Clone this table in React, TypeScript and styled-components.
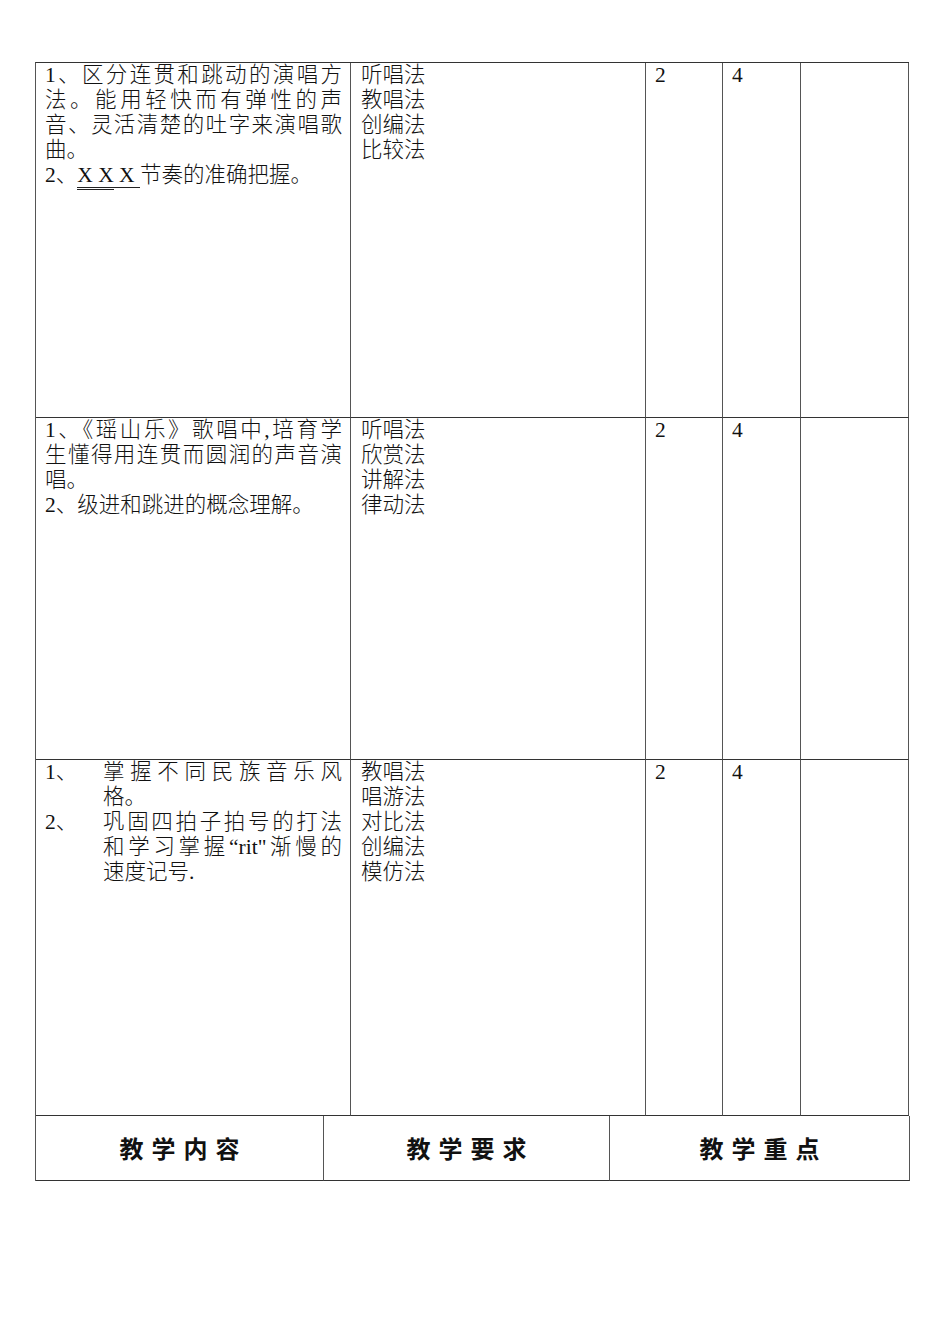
import React from 'react';
import styled, { createGlobalStyle } from 'styled-components';

const GlobalStyle = createGlobalStyle`
  html, body {
    margin: 0;
    padding: 0;
    background: #ffffff;
  }
  body {
    font-family: 'Liberation Serif', 'Noto Sans CJK SC', serif;
    color: #111111;
  }
`;

const Page = styled.div`
  width: 950px;
  min-height: 1344px;
  box-sizing: border-box;
  padding: 62px 0 0 35px;
`;

const Table = styled.div`
  display: grid;
  grid-template-columns: 315px 295px 77px 78px 108px;
  width: 874px;
  border-top: 1px solid #333;
  border-left: 1px solid #555;
  box-sizing: border-box;
`;

const Cell = styled.div<{ $height: number; $padLeft?: number }>`
  height: ${p => p.$height}px;
  box-sizing: border-box;
  border-right: 1px solid #555;
  border-bottom: 1px solid #333;
  padding: 0 8px 0 ${p => p.$padLeft ?? 9}px;
  font-size: 21.5px;
  font-weight: 300;
  line-height: 25px;
`;

const Line = styled.div<{ $justify?: boolean }>`
  white-space: nowrap;
  text-align: ${p => (p.$justify ? 'justify' : 'left')};
  text-align-last: ${p => (p.$justify ? 'justify' : 'left')};
`;

const Item = styled.div`
  display: grid;
  grid-template-columns: 58px 1fr;
`;

const DoubleUnder = styled.span`
  border-bottom: 3px double #222;
`;

const SingleUnder = styled.span`
  border-bottom: 1px solid #222;
`;

const Footer = styled.div`
  display: grid;
  grid-template-columns: 288px 286px 300px;
  width: 874px;
  border-left: 1px solid #555;
  box-sizing: border-box;
`;

const HeadCell = styled.div`
  height: 65px;
  box-sizing: border-box;
  border-right: 1px solid #555;
  border-bottom: 1px solid #333;
  display: flex;
  align-items: center;
  justify-content: center;
  font-family: 'Noto Sans CJK SC', sans-serif;
  font-weight: 700;
  font-size: 24px;
  letter-spacing: 8px;
  padding-left: 8px;
  padding-bottom: 2px;
`;

type Row = {
  height: number;
  content: React.ReactNode;
  methods: string[];
  hours: string;
  count: string;
};

const rows: Row[] = [
  {
    height: 355,
    content: (
      <>
        <Line $justify>1、区分连贯和跳动的演唱方</Line>
        <Line $justify>法。能用轻快而有弹性的声</Line>
        <Line $justify>音、灵活清楚的吐字来演唱歌</Line>
        <Line>曲。</Line>
        <Line>
          2、<DoubleUnder>X X</DoubleUnder>
          <SingleUnder>{'\u00a0X\u00a0'}</SingleUnder>节奏的准确把握。
        </Line>
      </>
    ),
    methods: ['听唱法', '教唱法', '创编法', '比较法'],
    hours: '2',
    count: '4',
  },
  {
    height: 342,
    content: (
      <>
        <Line $justify>1、《瑶山乐》歌唱中,培育学</Line>
        <Line $justify>生懂得用连贯而圆润的声音演</Line>
        <Line>唱。</Line>
        <Line>2、级进和跳进的概念理解。</Line>
      </>
    ),
    methods: ['听唱法', '欣赏法', '讲解法', '律动法'],
    hours: '2',
    count: '4',
  },
  {
    height: 356,
    content: (
      <>
        <Item>
          <Line>1、</Line>
          <div>
            <Line $justify>掌握不同民族音乐风</Line>
            <Line>格。</Line>
          </div>
        </Item>
        <Item>
          <Line>2、</Line>
          <div>
            <Line $justify>巩固四拍子拍号的打法</Line>
            <Line $justify>和学习掌握“rit"渐慢的</Line>
            <Line>速度记号.</Line>
          </div>
        </Item>
      </>
    ),
    methods: ['教唱法', '唱游法', '对比法', '创编法', '模仿法'],
    hours: '2',
    count: '4',
  },
];

export default function App() {
  return (
    <>
      <GlobalStyle />
      <Page>
        <Table>
          {rows.map((row, i) => (
            <React.Fragment key={i}>
              <Cell $height={row.height}>{row.content}</Cell>
              <Cell $height={row.height} $padLeft={10}>
                {row.methods.map(m => (
                  <Line key={m}>{m}</Line>
                ))}
              </Cell>
              <Cell $height={row.height}>
                <Line>{row.hours}</Line>
              </Cell>
              <Cell $height={row.height}>
                <Line>{row.count}</Line>
              </Cell>
              <Cell $height={row.height} />
            </React.Fragment>
          ))}
        </Table>
        <Footer>
          <HeadCell>教学内容</HeadCell>
          <HeadCell>教学要求</HeadCell>
          <HeadCell>教学重点</HeadCell>
        </Footer>
      </Page>
    </>
  );
}
